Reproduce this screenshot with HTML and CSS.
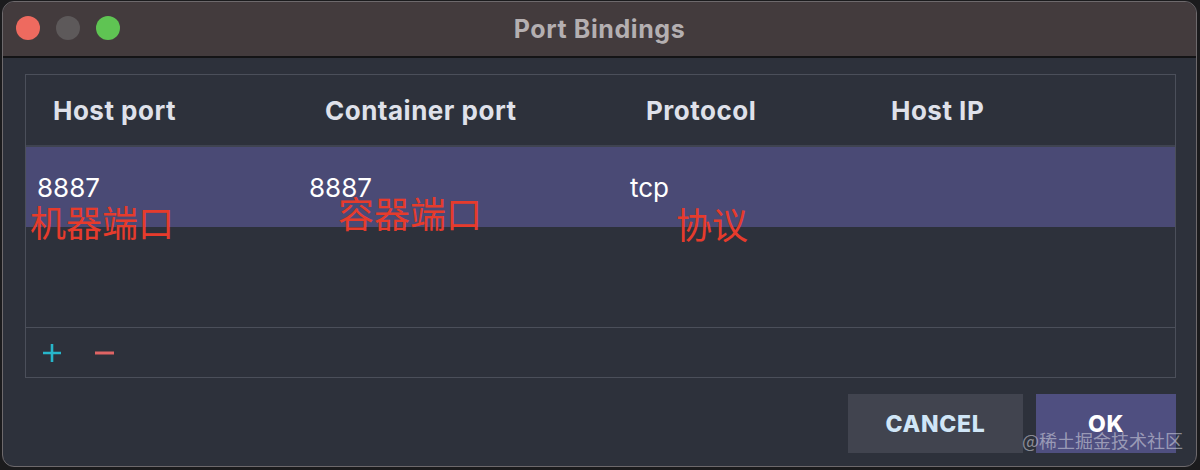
FILE: index.html
```html
<!DOCTYPE html>
<html lang="en">
<head>
    <meta charset="UTF-8">
    <meta name="viewport" content="width=device-width, initial-scale=1.0">
    <title>Port Bindings</title>
    <link rel="stylesheet" href="styles.css">
</head>
<body>
    <div class="window">
        <div class="titlebar">
            <div class="lights">
                <span class="light red"></span>
                <span class="light gray"></span>
                <span class="light green"></span>
            </div>
            <div class="title">Port Bindings</div>
        </div>

        <div class="content">
            <div class="table">
                <div class="row head">
                    <div class="cell">Host port</div>
                    <div class="cell">Container port</div>
                    <div class="cell">Protocol</div>
                    <div class="cell">Host IP</div>
                </div>
                <div class="row selected">
                    <div class="cell">8887</div>
                    <div class="cell">8887</div>
                    <div class="cell">tcp</div>
                    <div class="cell"></div>
                    <!-- red notes drawn over the screenshot -->
                    <span class="note note-host">机器端口</span>
                    <span class="note note-container">容器端口</span>
                    <span class="note note-proto">协议</span>
                </div>
                <div class="empty"></div>
                <div class="toolbar">
                    <button class="tool" title="Add">
                        <svg width="20" height="20" viewBox="0 0 20 20"><path d="M10 1v18M1 10h18" stroke="#27b6ca" stroke-width="2.6" fill="none"/></svg>
                    </button>
                    <button class="tool" title="Remove">
                        <svg width="20" height="20" viewBox="0 0 20 20"><path d="M1 10h19" stroke="#df6464" stroke-width="3" fill="none"/></svg>
                    </button>
                </div>
            </div>

            <div class="actions">
                <button class="btn cancel">CANCEL</button>
                <button class="btn ok">OK</button>
                <span class="watermark">@稀土掘金技术社区</span>
            </div>
        </div>
    </div>
</body>
</html>
```

FILE: styles.css
```css
html, body {
    margin: 0;
    padding: 0;
}

body {
    background-color: #1b1b1d;
    font-family: Inter, "Noto Sans", "Noto Sans CJK SC", sans-serif;
    width: 1200px;
    height: 470px;
    overflow: hidden;
}

.window {
    margin: 1px 0 0 2px;
    width: 1193px;
    height: 464px;
    border: 1px solid #6d696c;
    border-radius: 12px;
    background-color: #2d313b;
    overflow: hidden;
    display: flex;
    flex-direction: column;
}

.titlebar {
    position: relative;
    height: 54px;
    background-color: #433b3d;
    border-bottom: 2px solid #141416;
    display: flex;
    align-items: center;
    justify-content: center;
}

.lights {
    position: absolute;
    left: 13px;
    top: 14px;
    display: flex;
    gap: 16px;
}

.light {
    width: 24px;
    height: 24px;
    border-radius: 50%;
}

.red { background-color: #ee6a5f; }
.gray { background-color: #5d595a; }
.green { background-color: #5fc453; }

.title {
    color: #b4afb1;
    font-size: 25px;
    font-weight: 700;
    letter-spacing: 0.6px;
}

.content {
    padding: 16px 20px 0 22px;
}

.table {
    border: 1px solid #4b4f5a;
    display: flex;
    flex-direction: column;
}

.row {
    display: grid;
    grid-template-columns: 272px 321px 245px 1fr;
    align-items: center;
}

.head {
    height: 70px;
    border-bottom: 2px solid #3f4350;
}

.head .cell {
    padding-left: 27px;
    color: #dfe1ea;
    font-size: 26px;
    font-weight: 700;
    letter-spacing: 0.5px;
}

.selected {
    position: relative;
    height: 80px;
    background-color: #4a4a75;
}

.selected .cell {
    padding-left: 11px;
    color: #ffffff;
    font-size: 26px;
}

.note {
    position: absolute;
    color: #e63b2c;
    font-family: "Noto Sans CJK SC", sans-serif;
    font-size: 36px;
    line-height: 1;
}

.note-host { left: 4px; top: 56px; }
.note-container { left: 312px; top: 47px; }
.note-proto { left: 650px; top: 58px; }

.empty {
    height: 100px;
    border-bottom: 1px solid #4b4f5a;
}

.toolbar {
    height: 49px;
    display: flex;
    align-items: center;
    gap: 32px;
    padding-left: 16px;
}

.tool {
    background: none;
    border: none;
    padding: 0;
    width: 20px;
    height: 20px;
    cursor: pointer;
}

.tool svg {
    display: block;
}

.actions {
    position: relative;
    margin-top: 16px;
    display: flex;
    justify-content: flex-end;
    gap: 13px;
}

.btn {
    height: 59px;
    border: none;
    font-family: Inter, "Noto Sans", sans-serif;
    font-size: 23px;
    font-weight: 800;
    letter-spacing: 0.7px;
    cursor: pointer;
}

.cancel {
    width: 175px;
    background-color: #41444f;
    color: #d0e6f7;
}

.ok {
    width: 140px;
    background-color: #4f4f80;
    color: #ffffff;
}

.watermark {
    position: absolute;
    right: -7px;
    top: 37px;
    color: rgba(220, 220, 228, 0.55);
    font-family: "Noto Sans CJK SC", sans-serif;
    font-size: 18px;
    line-height: 1;
    pointer-events: none;
}
```
